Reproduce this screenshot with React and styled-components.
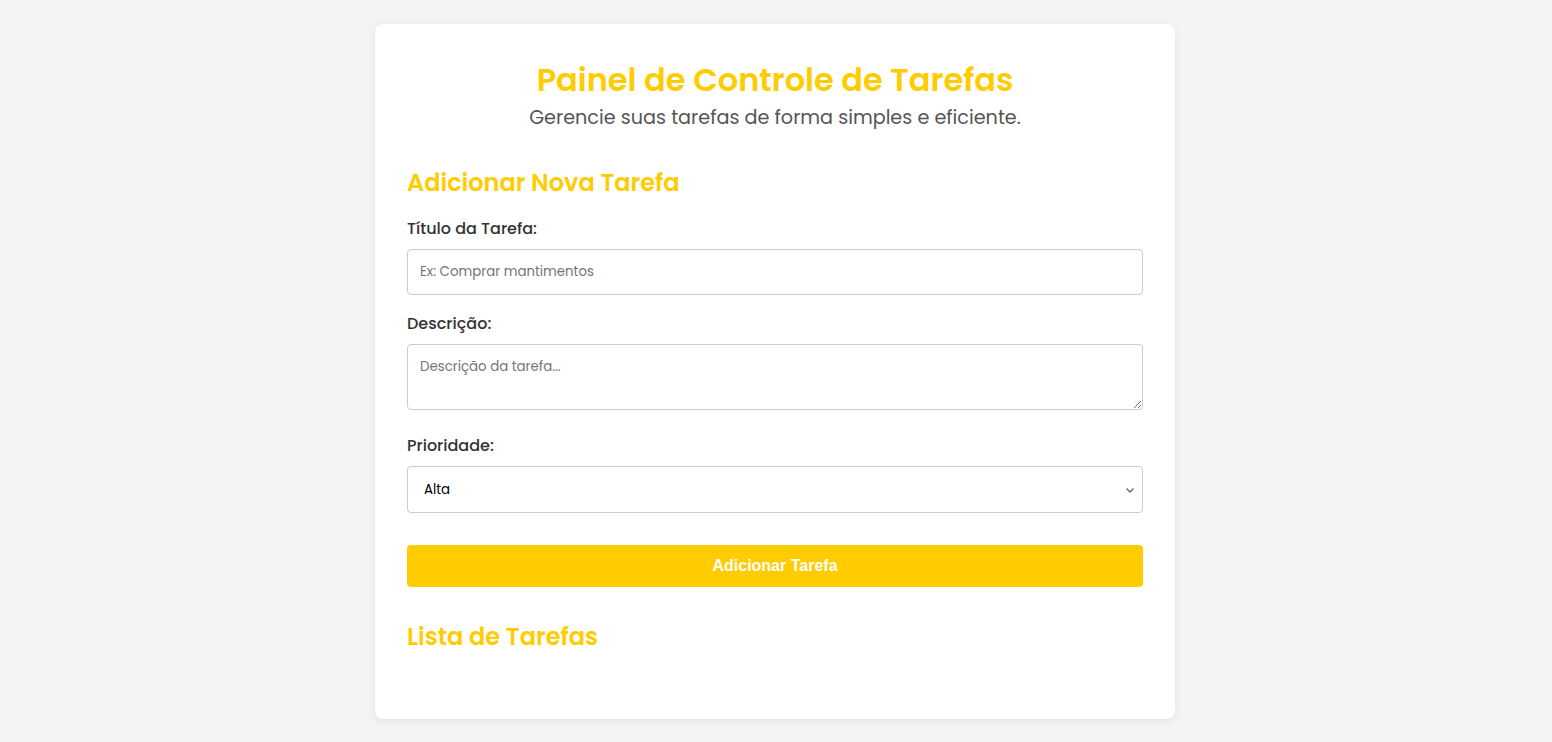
import React, { useState } from 'react';
import styled, { createGlobalStyle } from 'styled-components';

const GlobalStyle = createGlobalStyle`
  body {
    margin: 0;
    background-color: #f4f4f4;
    font-family: Poppins, "Open Sans", "Noto Sans", sans-serif;
    color: #333;
  }
`;

const Container = styled.div`
  box-sizing: border-box;
  width: 800px;
  margin: 24px auto;
  padding: 32px 32px 48px;
  background-color: #fff;
  border-radius: 8px;
  box-shadow: 0 2px 8px rgba(0, 0, 0, 0.08);
  transform: translateX(-1px);
`;

const Header = styled.header`
  text-align: center;
  margin-bottom: 33px;
`;

const Title = styled.h1`
  margin: 0;
  font-size: 32px;
  line-height: 48px;
  font-weight: 600;
  color: #ffcc00;
`;

const Subtitle = styled.p`
  margin: 0;
  font-size: 19.2px;
  line-height: 28px;
  color: #555;
`;

const SectionTitle = styled.h2`
  margin: 0 0 16px;
  font-size: 24px;
  line-height: 36px;
  font-weight: 600;
  color: #ffcc00;
`;

const Form = styled.form`
  display: flex;
  flex-direction: column;
  margin-bottom: 32px;
`;

const Field = styled.div`
  margin-bottom: ${(p) => p.$gap || 16}px;
`;

const Label = styled.label`
  display: block;
  margin-bottom: 8px;
  font-size: 16px;
  line-height: 24px;
  font-weight: 500;
  color: #333;
`;

const fieldBase = `
  display: block;
  box-sizing: border-box;
  width: 100%;
  padding: 12px;
  border: 1px solid #ccc;
  border-radius: 4px;
  font-family: Poppins, "Open Sans", "Noto Sans", sans-serif;
  font-size: 13.33px;
  color: #333;
  background-color: #fff;
  &::placeholder {
    color: #757575;
  }
`;

const Input = styled.input`
  ${fieldBase}
  height: 46px;
`;

const TextArea = styled.textarea`
  ${fieldBase}
  height: 66px;
  resize: vertical;
`;

const SelectWrap = styled.div`
  position: relative;
`;

const Select = styled.select`
  ${fieldBase}
  height: 47px;
  color: #000;
  appearance: none;
  padding: 12px 32px 12px 16px;
`;

const Chevron = styled.svg`
  position: absolute;
  right: 8px;
  top: 50%;
  width: 10px;
  height: 10px;
  margin-top: -5px;
  pointer-events: none;
`;

const SubmitButton = styled.button`
  height: 42px;
  margin-top: 16px;
  border: none;
  border-radius: 4px;
  background-color: #ffcc00;
  color: #fff;
  font-family: "Liberation Sans", Arial, sans-serif;
  font-size: 16px;
  font-weight: bold;
  cursor: pointer;

  &:hover {
    background-color: #e6b800;
  }
`;

const TaskList = styled.ul`
  margin: 0;
  padding: 0;
  list-style: none;
`;

const App = () => {
  const [title, setTitle] = useState('');
  const [description, setDescription] = useState('');
  const [priority, setPriority] = useState('alta');
  const [tasks, setTasks] = useState([]);

  const addTask = (e) => {
    e.preventDefault();
    if (!title.trim()) return;
    setTasks([...tasks, { title, description, priority }]);
    setTitle('');
    setDescription('');
  };

  return (
    <>
      <GlobalStyle />
      <Container>
        <Header>
          <Title>Painel de Controle de Tarefas</Title>
          <Subtitle>Gerencie suas tarefas de forma simples e eficiente.</Subtitle>
        </Header>

        <SectionTitle>Adicionar Nova Tarefa</SectionTitle>
        <Form onSubmit={addTask}>
          <Field $gap={17}>
            <Label htmlFor="titulo">Título da Tarefa:</Label>
            <Input
              id="titulo"
              placeholder="Ex: Comprar mantimentos"
              value={title}
              onChange={(e) => setTitle(e.target.value)}
            />
          </Field>
          <Field $gap={24}>
            <Label htmlFor="descricao">Descrição:</Label>
            <TextArea
              id="descricao"
              placeholder="Descrição da tarefa..."
              value={description}
              onChange={(e) => setDescription(e.target.value)}
            />
          </Field>
          <Field>
            <Label htmlFor="prioridade">Prioridade:</Label>
            <SelectWrap>
              <Select id="prioridade" value={priority} onChange={(e) => setPriority(e.target.value)}>
                <option value="alta">Alta</option>
                <option value="media">Média</option>
                <option value="baixa">Baixa</option>
              </Select>
              <Chevron viewBox="0 0 10 10" fill="none" stroke="#666" strokeWidth="1.4">
                <path d="M1.5 3.5 L5 7 L8.5 3.5" />
              </Chevron>
            </SelectWrap>
          </Field>
          <SubmitButton type="submit">Adicionar Tarefa</SubmitButton>
        </Form>

        <SectionTitle>Lista de Tarefas</SectionTitle>
        <TaskList>
          {tasks.map((t, i) => (
            <li key={i}>{t.title}</li>
          ))}
        </TaskList>
      </Container>
    </>
  );
};

export default App;
